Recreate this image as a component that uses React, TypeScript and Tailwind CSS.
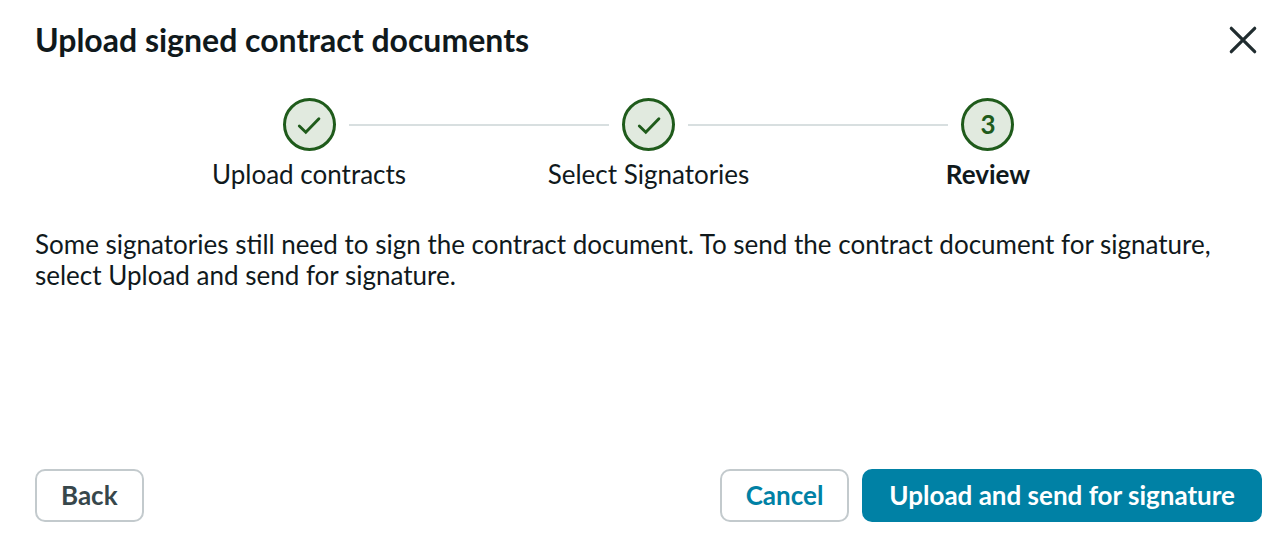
type StepItem = { label: string; done: boolean };

const steps: StepItem[] = [
  { label: "Upload contracts", done: true },
  { label: "Select Signatories", done: true },
  { label: "Review", done: false },
];

function CheckIcon() {
  return (
    <svg role="img" aria-label="Completed" width="28" height="28" viewBox="0 0 28 28" fill="none" stroke="currentColor" strokeWidth="2.9" strokeLinecap="round" strokeLinejoin="miter">
      <path d="M4.3 15 10.8 21.3 23.9 7.8" />
    </svg>
  );
}

function CloseIcon() {
  return (
    <svg aria-hidden="true" width="28" height="28" viewBox="0 0 28 28" fill="none" stroke="currentColor" strokeWidth="3.2" strokeLinecap="round">
      <path d="M2.3 2.3 25.7 25.7M25.7 2.3 2.3 25.7" />
    </svg>
  );
}

function Stepper() {
  return (
    <ol className="mx-auto mt-[37px] grid w-[83%] grid-cols-3">
      {steps.map((step, i) => (
        <li key={step.label} aria-current={step.done ? undefined : "step"}>
          <div className="flex items-center gap-[13px]">
            <span className={i > 0 ? "h-0.5 flex-1 bg-[#d8dfe0]" : "h-0.5 flex-1"} />
            <span className="flex size-[53px] items-center justify-center rounded-full border-[3px] border-[#1f5b1b] bg-[#e1eadf] text-[26px] font-bold text-[#1f5b1b]">
              {step.done ? <CheckIcon /> : i + 1}
            </span>
            <span className={i < steps.length - 1 ? "h-0.5 flex-1 bg-[#d8dfe0]" : "h-0.5 flex-1"} />
          </div>
          <p className={step.done ? "mt-2 text-center" : "mt-2 text-center font-bold"}>{step.label}</p>
        </li>
      ))}
    </ol>
  );
}

export default function App() {
  return (
    <main className="flex min-h-screen flex-col bg-white pt-[18px] pr-[10px] pb-6 pl-[35px] font-['Lato',sans-serif] text-[26px] leading-[31px] text-[#10191c]">
      <header className="flex items-center justify-between">
        <h1 className="text-[32px] leading-[43px] font-bold">Upload signed contract documents</h1>
        <button type="button" aria-label="Close" className="p-[5px] text-[#202c2f]">
          <CloseIcon />
        </button>
      </header>
      <Stepper />
      <p className="mt-[39px] pr-3">
        Some signatories still need to sign the contract document. To send the contract document for signature, select Upload and send for signature.
      </p>
      <footer className="mt-auto flex items-center gap-[13px] font-bold">
        <button type="button" className="mr-auto h-[53px] rounded-[10px] border-2 border-[#c3cacd] px-6 text-[#37474b]">Back</button>
        <button type="button" className="h-[53px] rounded-[10px] border-2 border-[#c3cacd] px-6 text-[#0081a5]">Cancel</button>
        <button type="button" className="h-[53px] rounded-[10px] bg-[#0081a5] px-[27px] text-white">Upload and send for signature</button>
      </footer>
    </main>
  );
}
